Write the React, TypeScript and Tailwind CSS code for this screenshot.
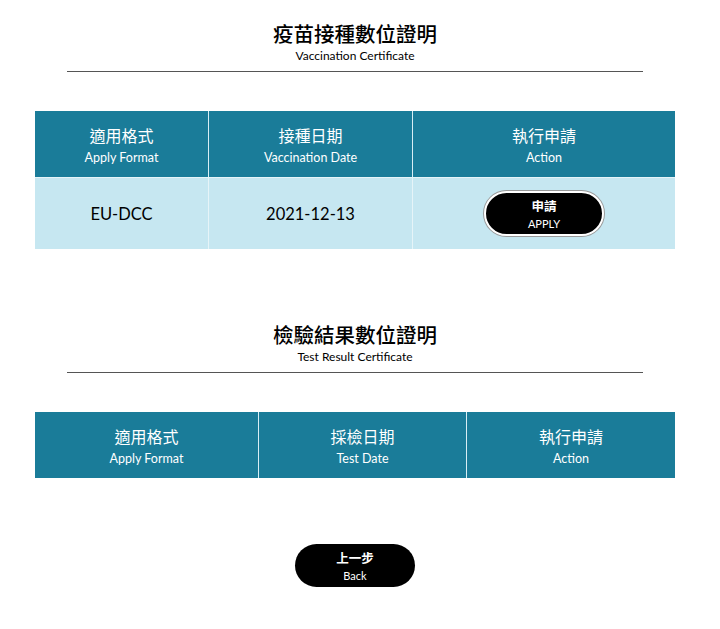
import React from 'react';

const font = { fontFamily: 'Lato, "Noto Sans CJK TC", sans-serif' };

const SectionTitle: React.FC<{ zh: string; en: string }> = ({ zh, en }) => (
    <div className="flex flex-col items-center">
        <h2 className="text-[20.5px] leading-[28px] font-medium text-black">{zh}</h2>
        <p className="text-[12px] leading-[16px] text-black">{en}</p>
        <div className="mt-[7px] w-[576px] h-px bg-[#555]" />
    </div>
);

const HeadCell: React.FC<{ zh: string; en: string; last?: boolean }> = ({ zh, en, last }) => (
    <div className={`flex flex-col items-center justify-center pt-[5px] text-white ${last ? '' : 'border-r border-[#d8eef5]'}`}>
        <span className="text-[16px] leading-[22px]">{zh}</span>
        <span className="text-[12.5px] leading-[22px]">{en}</span>
    </div>
);

const PillButton: React.FC<{ zh: string; en: string; className?: string }> = ({ zh, en, className }) => (
    <button className={`flex flex-col items-center justify-center pt-[2px] bg-black text-white rounded-full ${className}`}>
        <span className="text-[12.5px] leading-[17px] font-bold">{zh}</span>
        <span className="text-[11px] leading-[17px]">{en}</span>
    </button>
);

export default function App() {
    return (
        <div className="w-[710px] h-[629px] bg-white flex flex-col items-center pt-[20px]" style={font}>
            <SectionTitle zh="疫苗接種數位證明" en="Vaccination Certificate" />

            <div className="mt-[39px] w-[640px]">
                <div className="grid grid-cols-[174px_204px_262px] h-[66px] bg-[#1a7c99]">
                    <HeadCell zh="適用格式" en="Apply Format" />
                    <HeadCell zh="接種日期" en="Vaccination Date" />
                    <HeadCell zh="執行申請" en="Action" last />
                </div>
                <div className="grid grid-cols-[174px_204px_262px] h-[72px] bg-[#c6e7f1] border-t border-[#e6f4f8]">
                    <div className="flex items-center justify-center pt-[2px] text-[16.5px] text-black border-r border-[#e6f4f8]">EU-DCC</div>
                    <div className="flex items-center justify-center pt-[2px] text-[16.5px] text-black border-r border-[#e6f4f8]">2021-12-13</div>
                    <div className="flex items-center justify-center">
                        <PillButton zh="申請" en="APPLY" className="w-[120px] h-[45px] border-2 border-white shadow-[0_0_0_1px_#999]" />
                    </div>
                </div>
            </div>

            <div className="mt-[72px]">
                <SectionTitle zh="檢驗結果數位證明" en="Test Result Certificate" />
            </div>

            <div className="mt-[39px] w-[640px]">
                <div className="grid grid-cols-[224px_208px_208px] h-[66px] bg-[#1a7c99]">
                    <HeadCell zh="適用格式" en="Apply Format" />
                    <HeadCell zh="採檢日期" en="Test Date" />
                    <HeadCell zh="執行申請" en="Action" last />
                </div>
            </div>

            <PillButton zh="上一步" en="Back" className="mt-[66px] w-[120px] h-[43px]" />
        </div>
    );
}
